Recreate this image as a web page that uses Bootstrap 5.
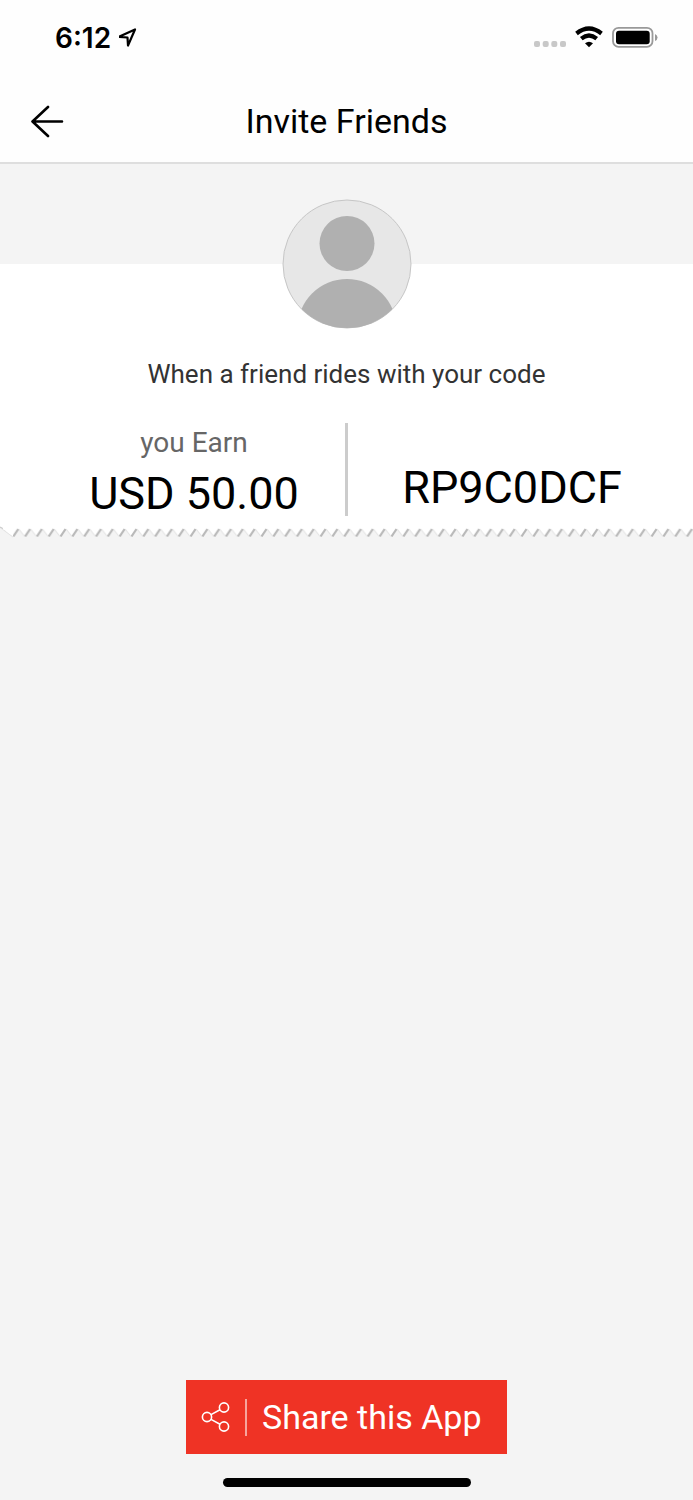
<!DOCTYPE html>
<html lang="en">
<head>
<meta charset="utf-8">
<meta name="viewport" content="width=device-width, initial-scale=1">
<title>Invite Friends</title>
<link href="https://cdn.jsdelivr.net/npm/bootstrap@5.3.0/dist/css/bootstrap.min.css" rel="stylesheet">
<style>
body { font-family: Roboto, sans-serif; background: #f4f4f4; color: #000; }
svg { display: block; }
.app-header { background: #fefefe; border-bottom: 2px solid #dedede; }
.status-bar { height: 80px; padding: 0 35px 5px 55px; }
.clock { font: 600 28px/32px Inter, sans-serif; }
.title-bar { height: 82px; display: grid; grid-template-columns: 96px 1fr 96px; }
.screen-title { font-size: 34px; line-height: 40px; font-weight: 400; }
.back-btn { padding: 0 0 0 31px; border: 0; border-radius: 0; }
.hero { background: linear-gradient(#f4f4f4 100px, #fff 100px); padding-top: 35px; }
.lead-text { font-size: 26px; line-height: 32px; color: #333; margin: 29px 0 33px; }
.offer { min-height: 93px; display: grid; grid-template-columns: 1fr 3px 1fr; }
.offer-earn { padding-left: 43px; }
.offer-rule { background: #ccc; }
.offer-code { padding: 0 17px 2px 0; }
.earn-label { font-size: 28px; line-height: 32px; color: #666; padding-top: 4px; }
.big-text { font-size: 45px; line-height: 52px; }
.earn-amount { margin-top: 9px; margin-bottom: -4px; }
.teeth { height: 26px; }
.share-btn { width: 321px; height: 74px; border: 0; border-radius: 0; background: #ef3325; color: #fff; padding: 0 15px; font-size: 34px; line-height: 40px; }
.share-btn:hover, .share-btn:active { background: #d92a1d !important; color: #fff !important; }
.share-rule { width: 2px; height: 37px; background: #f7a49d; margin: 0 15px; }
.home-bar { width: 248px; height: 9px; background: #000; margin: 24px 0 13px; }
</style>
</head>
<body>
<div class="d-flex flex-column min-vh-100">
  <header class="app-header">
    <div class="status-bar d-flex align-items-center justify-content-between">
      <div class="d-flex align-items-center gap-2">
        <span class="clock">6:12</span>
        <svg width="20" height="20" viewBox="0 0 20 20" fill="none" stroke="#000" stroke-width="2.200" stroke-linejoin="round" aria-hidden="true"><path d="M0 8.800 16 1.500 9 17.500 8.500 9.500Z"/></svg>
      </div>
      <div class="d-flex align-items-center" aria-hidden="true">
        <svg width="124" height="26" viewBox="0 0 124 26">
          <g fill="#c8c8c8"><rect x="0" y="16" width="6" height="6" rx="2"/><rect x="8.700" y="16" width="6" height="6" rx="2"/><rect x="17.300" y="16" width="6" height="6" rx="2"/><rect x="26" y="16" width="6" height="6" rx="2"/></g>
          <g fill="none" stroke="#000" stroke-width="4.200"><path d="M42.500 8.500Q55 -1.500 67.500 8.500"/><path d="M47.300 13.600Q55 7.400 62.700 13.600"/></g>
          <path d="M51 18.300Q55 15 59 18.300L55 22.300Z"/>
          <rect x="79" y="2.800" width="39.500" height="19" rx="5.500" fill="none" stroke="#999" stroke-width="1.800"/>
          <rect x="82" y="5.800" width="33.700" height="13.400" rx="3"/>
          <path d="M121 9v7q2.500-1 2.500-3.500T121 9Z" fill="#999"/>
        </svg>
      </div>
    </div>
    <div class="title-bar align-items-center">
      <button type="button" class="btn back-btn" aria-label="Back">
        <svg width="34" height="34" viewBox="0 0 34 34" fill="none" stroke="#000" stroke-width="2.600" stroke-linecap="round" stroke-linejoin="round"><path d="M31 17.500H1.500M17 3 1.500 17.500 17 32"/></svg>
      </button>
      <h1 class="screen-title text-center mb-0">Invite Friends</h1>
    </div>
  </header>

  <main class="flex-grow-1 d-flex flex-column">
    <section class="hero text-center">
      <svg class="mx-auto" width="130" height="130" viewBox="0 0 130 130" role="img" aria-label="Profile picture">
        <defs><clipPath id="face"><circle cx="65" cy="65" r="64"/></clipPath></defs>
        <circle cx="65" cy="65" r="64" fill="#e7e7e7" stroke="#c6c6c6"/>
        <g fill="#b0b0b0" clip-path="url(#face)"><circle cx="65" cy="44.500" r="27.500"/><circle cx="65" cy="129.500" r="49.500"/></g>
      </svg>
      <p class="lead-text">When a friend rides with your code</p>
      <div class="offer">
        <div class="offer-earn">
          <div class="earn-label">you Earn</div>
          <div class="big-text earn-amount">USD 50.00</div>
        </div>
        <div class="offer-rule"></div>
        <div class="offer-code d-flex align-items-end justify-content-center">
          <span class="big-text">RP9C0DCF</span>
        </div>
      </div>
    </section>
    <svg class="teeth w-100" aria-hidden="true">
      <defs>
        <pattern id="tooth" x="12.800" y="0" width="11.820" height="26" patternUnits="userSpaceOnUse">
          <rect width="12" height="26" fill="#f4f4f4"/>
          <path d="M0 0H12V20.500L6 13 0 20.500Z" fill="#fff"/>
          <path d="M0.500 20.500 5.500 13" stroke="#b8b8b8" stroke-width="2.200"/>
          <path d="M6 13 11.800 20.500" stroke="#e4e4e4" stroke-width="1"/>
        </pattern>
      </defs>
      <rect width="100%" height="26" fill="url(#tooth)"/>
      <path d="M0 0H13V20.500L0 11Z" fill="#fff"/><path d="M0 26V11L12.800 21V26Z" fill="#f4f4f4"/>
      <path d="M0 11.500 12.800 21" stroke="#e4e4e4"/><path d="M0 11 3 12.500" stroke="#c4c4c4"/>
    </svg>
    <div class="mt-auto d-flex flex-column align-items-center">
      <button type="button" class="btn share-btn d-flex align-items-center">
        <svg width="29" height="32" viewBox="0 0 29 32" fill="none" stroke="#fff" stroke-width="1.600" aria-hidden="true"><circle cx="6" cy="16" r="4.600"/><circle cx="23" cy="6.500" r="4.600"/><circle cx="23" cy="25.500" r="4.600"/><path d="M10 13.600 19 8.700M10 18.400 19 23.300"/></svg>
        <span class="share-rule"></span>
        <span>Share this App</span>
      </button>
      <div class="home-bar rounded-pill"></div>
    </div>
  </main>
</div>
<script src="https://cdn.jsdelivr.net/npm/bootstrap@5.3.0/dist/js/bootstrap.bundle.min.js"></script>
</body>
</html>
